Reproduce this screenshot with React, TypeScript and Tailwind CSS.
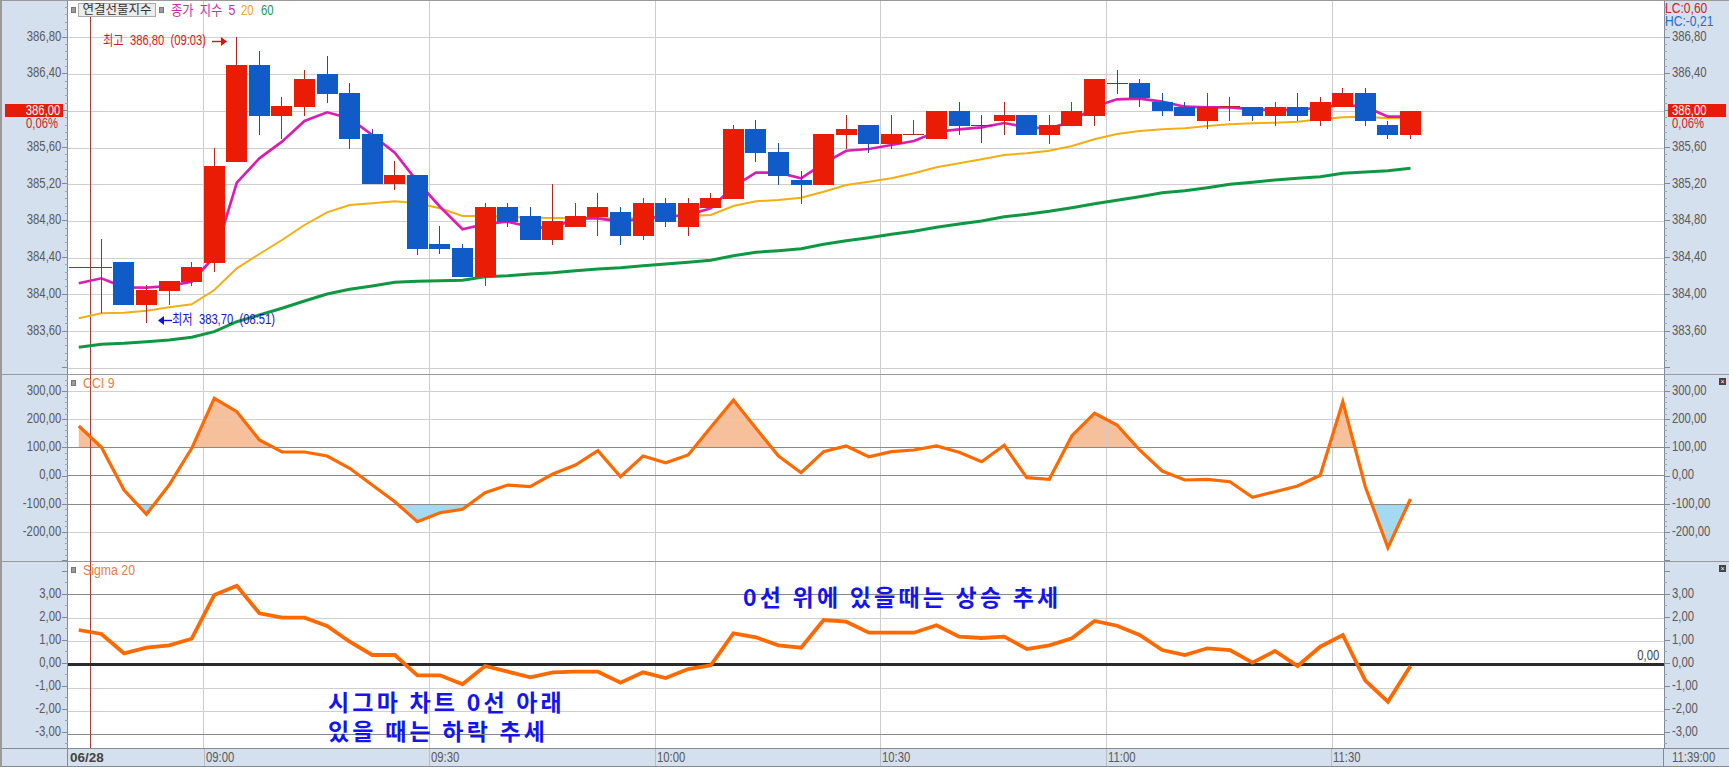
import React from "react";

const X = (i: number) => 101.4 + 22.57 * i;
const xs = (i: number) => i - 1;

type C = [number, number, number, number, "r" | "b"];
const candles: C[] = [
  [802, 802, 717, 940, "r"],
  [787, 914, 787, 914, "b"],
  [870, 914, 855, 968, "r"],
  [843, 872, 843, 915, "r"],
  [802, 845, 787, 858, "r"],
  [498, 788, 443, 815, "r"],
  [195, 485, 112, 485, "r"],
  [195, 347, 152, 405, "b"],
  [318, 347, 290, 417, "r"],
  [237, 320, 210, 347, "r"],
  [223, 281, 168, 308, "b"],
  [280, 416, 250, 446, "b"],
  [402, 553, 388, 553, "b"],
  [525, 553, 483, 570, "r"],
  [525, 746, 525, 765, "b"],
  [733, 746, 678, 761, "b"],
  [745, 830, 732, 830, "b"],
  [622, 830, 608, 858, "r"],
  [622, 665, 608, 680, "b"],
  [648, 719, 622, 719, "b"],
  [664, 719, 552, 735, "r"],
  [648, 680, 608, 680, "r"],
  [622, 650, 580, 708, "r"],
  [636, 707, 622, 735, "b"],
  [609, 707, 595, 720, "r"],
  [609, 665, 595, 680, "b"],
  [609, 680, 595, 708, "r"],
  [595, 623, 580, 623, "r"],
  [387, 596, 376, 596, "r"],
  [387, 458, 360, 485, "b"],
  [456, 527, 430, 555, "b"],
  [540, 554, 513, 612, "b"],
  [402, 554, 402, 554, "r"],
  [387, 404, 345, 446, "r"],
  [375, 432, 375, 458, "b"],
  [402, 432, 345, 446, "r"],
  [403, 403, 360, 403, "r"],
  [333, 416, 333, 416, "r"],
  [333, 377, 307, 405, "b"],
  [377, 377, 345, 430, "b"],
  [345, 362, 307, 405, "r"],
  [345, 404, 345, 404, "b"],
  [375, 404, 345, 432, "r"],
  [333, 377, 307, 377, "r"],
  [237, 347, 237, 377, "r"],
  [250, 250, 210, 283, "b"],
  [250, 293, 237, 320, "b"],
  [306, 334, 280, 348, "b"],
  [320, 347, 306, 347, "b"],
  [320, 362, 280, 388, "r"],
  [320, 320, 292, 362, "r"],
  [320, 347, 320, 362, "b"],
  [320, 347, 306, 377, "r"],
  [320, 347, 280, 362, "b"],
  [306, 362, 292, 377, "r"],
  [280, 320, 265, 320, "r"],
  [280, 362, 265, 377, "b"],
  [376, 404, 362, 417, "b"],
  [334, 404, 334, 417, "r"],
];

const ma5 = [850, 835, 862, 863, 858, 845, 770, 548, 475, 425, 363, 337, 355, 405, 458, 545, 620, 688, 672, 665, 680, 685, 655, 655, 665, 655, 650, 645, 625, 560, 518, 518, 535, 490, 452, 447, 435, 423, 395, 388, 382, 369, 382, 385, 365, 320, 298, 296, 305, 320, 322, 322, 328, 330, 330, 322, 315, 320, 350, 350];
const ma20 = [955, 940, 938, 932, 922, 913, 870, 805, 762, 720, 675, 637, 615, 610, 604, 610, 625, 648, 648, 650, 653, 654, 655, 655, 655, 655, 650, 648, 645, 618, 604, 600, 593, 575, 555, 545, 535, 520, 502, 490, 478, 465, 460, 452, 438, 418, 402, 393, 388, 385, 378, 373, 370, 368, 365, 358, 352, 350, 355, 355];
const ma60 = [1042, 1033, 1030, 1025, 1020, 1012, 995, 965, 945, 925, 903, 882, 868, 858, 847, 844, 842, 841, 830, 827, 822, 818, 812, 807, 803, 797, 792, 787, 781, 767, 757, 752, 746, 733, 722, 713, 703, 694, 682, 672, 663, 650, 643, 634, 623, 611, 601, 590, 578, 572, 563, 553, 547, 540, 535, 530, 520, 516, 512, 505];
const cci = [168, 232, 360, 433, 345, 235, 85, 125, 210, 246, 246, 258, 295, 345, 395, 455, 428, 418, 368, 345, 350, 312, 285, 242, 320, 258, 278, 255, 172, 90, 175, 258, 308, 245, 228, 260, 245, 240, 228, 247, 275, 226, 323, 328, 197, 130, 165, 240, 303, 330, 328, 335, 382, 365, 348, 316, 95, 350, 533, 387];
const sigma = [780, 792, 850, 833, 826, 806, 675, 647, 730, 743, 743, 768, 815, 855, 855, 916, 916, 943, 888, 905, 922, 907, 905, 905, 938, 907, 924, 897, 886, 790, 802, 826, 833, 750, 755, 788, 788, 788, 766, 800, 804, 800, 837, 826, 805, 753, 767, 795, 840, 855, 835, 840, 878, 843, 888, 830, 795, 932, 995, 888];

const pts1 = (a: number[]) => a.map((v, k) => `${X(xs(k)).toFixed(1)},${(v / 3).toFixed(1)}`).join(" ");
const pts2 = (a: number[]) => a.map((v, k) => `${X(xs(k)).toFixed(1)},${(370 + v / 3).toFixed(1)}`).join(" ");

const vgrid = [203.5, 429.5, 655.5, 880.5, 1106.5, 1332];
const priceY = [37.5, 74.5, 111.5, 148.5, 184.5, 221.5, 258.5, 294.5, 331.5, 368.5];
const cciY: [number, boolean][] = [[391.5, false], [419.5, false], [447.5, true], [475.5, true], [504.5, true], [532.5, false]];
const sigY: [number, boolean][] = [[594.5, true], [618.5, false], [641.5, false], [688.5, false], [711.5, false], [734.5, true]];

const priceLabels = ["386,80", "386,40", "386,00", "385,60", "385,20", "384,80", "384,40", "384,00", "383,60"];
const cciLabels = ["300,00", "200,00", "100,00", "0,00", "-100,00", "-200,00"];
const sigLabels = ["3,00", "2,00", "1,00", "0,00", "-1,00", "-2,00", "-3,00"];

function Grid({ y1, y2, lines }: { y1: number; y2: number; lines: [number, boolean][] }) {
  return (
    <g shapeRendering="crispEdges">
      {vgrid.map((x) => (
        <line key={x} x1={x} x2={x} y1={y1} y2={y2} stroke="#cccccc" strokeWidth={1} />
      ))}
      {lines.map(([y, dark]) => (
        <line key={y} x1={68} x2={1664} y1={y} y2={y} stroke={dark ? "#8a8a8a" : "#cfcfcf"} strokeWidth={1} />
      ))}
      <line x1={68} x2={1664} y1={y1 + 0.5} y2={y1 + 0.5} stroke="#999999" strokeWidth={1} />
    </g>
  );
}

function Crosshair({ y1, y2 }: { y1: number; y2: number }) {
  return <line x1={90.5} x2={90.5} y1={y1} y2={y2} stroke="#ad3a3a" strokeWidth={1} shapeRendering="crispEdges" />;
}

function PriceChart() {
  return (
    <svg className="block w-[1596px] h-[374px]" viewBox="68 0 1596 374">
      <Grid y1={0} y2={374} lines={priceY.map((y) => [y, false] as [number, boolean])} />
      <Crosshair y1={17} y2={374} />
      <polyline points={pts1(ma60)} fill="none" stroke="#0f9744" strokeWidth={3} />
      <polyline points={pts1(ma20)} fill="none" stroke="#f2ae12" strokeWidth={2} />
      <polyline points={pts1(ma5)} fill="none" stroke="#d91fb2" strokeWidth={2.7} />
      <g shapeRendering="crispEdges">
        {candles.map(([t, b, wt, wb, c], i) => {
          const cx = X(i);
          const wick = c === "r" ? "#b3281c" : "#1650ab";
          const fill = c === "r" ? "#ea1c06" : "#115bc8";
          const doji = t === b;
          return (
            <g key={i}>
              <line x1={cx} x2={cx} y1={wt / 3} y2={wb / 3} stroke={wick} strokeWidth={1} />
              {doji ? (
                <line x1={cx - 10.5} x2={cx + 10.5} y1={t / 3} y2={t / 3} stroke={wick} strokeWidth={1} />
              ) : (
                <rect x={cx - 10.5} width={21} y={t / 3} height={(b - t) / 3} fill={fill} />
              )}
            </g>
          );
        })}
        <line x1={69} x2={112} y1={267.5} y2={267.5} stroke="#b3281c" strokeWidth={1} />
      </g>
      <path d="M212 41.5H222" stroke="#e01010" strokeWidth={1.4} />
      <path d="M221 37L227 41.5L221 46Z" fill="#e01010" />
      <path d="M162 320.5H172" stroke="#1010e0" strokeWidth={1.4} />
      <path d="M164 316L158 320.5L164 325Z" fill="#1010e0" />
    </svg>
  );
}

function CciChart() {
  const line = pts2(cci);
  const firstX = X(-1).toFixed(1);
  const lastX = X(58).toFixed(1);
  return (
    <svg className="block w-[1596px] h-[187px]" viewBox="68 374 1596 187">
      <defs>
        <clipPath id="above"><rect x={68} y={374} width={1596} height={73.5} /></clipPath>
        <clipPath id="below"><rect x={68} y={504.5} width={1596} height={56.5} /></clipPath>
      </defs>
      <polygon points={`${line} ${lastX},447.5 ${firstX},447.5`} fill="#f7c09c" clipPath="url(#above)" />
      <polygon points={`${line} ${lastX},504.5 ${firstX},504.5`} fill="#a3d9f1" clipPath="url(#below)" />
      <Grid y1={374} y2={561} lines={cciY} />
      <Crosshair y1={374} y2={561} />
      <polyline points={line} fill="none" stroke="#ff6a00" strokeWidth={3.2} strokeLinejoin="miter" />
    </svg>
  );
}

function SigmaChart() {
  return (
    <svg className="block w-[1596px] h-[187px]" viewBox="68 561 1596 187">
      <Grid y1={561} y2={748} lines={sigY} />
      <Crosshair y1={561} y2={748} />
      <line x1={68} x2={1664} y1={664.5} y2={664.5} stroke="#2b2b2b" strokeWidth={2.8} />
      <polyline points={pts2(sigma)} fill="none" stroke="#ff6a00" strokeWidth={3.8} />
    </svg>
  );
}

function Ticks({ h, first, step, sub, side }: { h: number; first: number; step: number; sub: number; side: "l" | "r" }) {
  const major: number[] = [];
  const minor: number[] = [];
  const s = step / sub;
  for (let y = first % s; y < h; y += s) {
    const k = (y - first) / step;
    if (Math.abs(k - Math.round(k)) < 0.01) major.push(y);
    else minor.push(y);
  }
  const w = side === "l" ? 68 : 65;
  return (
    <svg className="absolute inset-0 w-full h-full pointer-events-none" viewBox={`0 0 ${w} ${h}`} preserveAspectRatio="none" shapeRendering="crispEdges">
      <line x1={side === "l" ? 67.5 : 0.5} x2={side === "l" ? 67.5 : 0.5} y1={0} y2={h} stroke="#7f8b99" />
      {major.map((y) => (
        <line key={y} x1={side === "l" ? 62 : 0} x2={side === "l" ? 68 : 6} y1={Math.floor(y) + 0.5} y2={Math.floor(y) + 0.5} stroke="#7f8b99" />
      ))}
      {minor.map((y) => (
        <line key={y} x1={side === "l" ? 65 : 0} x2={side === "l" ? 68 : 3} y1={Math.floor(y) + 0.5} y2={Math.floor(y) + 0.5} stroke="#9aa5b2" />
      ))}
      <line x1={0} x2={w} y1={0.5} y2={0.5} stroke="#999999" />
    </svg>
  );
}

const axisFont = "font-['Liberation_Sans',sans-serif] text-[14.5px] leading-none text-[#5a5a5a]";
const krFont = "font-['Liberation_Sans','Noto_Sans_CJK_KR',sans-serif]";

function NL({ children }: { children: React.ReactNode }) {
  return <span className="inline-block whitespace-nowrap origin-left scale-x-[0.78]">{children}</span>;
}
function NR({ children }: { children: React.ReactNode }) {
  return <span className="inline-block whitespace-nowrap origin-right scale-x-[0.78]">{children}</span>;
}

function Axis({ labels, pt, step, side, h, first, sub, children }: { labels: string[]; pt: string; step: string; side: "l" | "r"; h: number; first: number; sub: number; children?: React.ReactNode }) {
  return (
    <div className={`relative shrink-0 bg-[#d5e0ee] ${side === "l" ? "w-[68px]" : "w-[65px]"}`}>
      <Ticks h={h} first={first} step={Number(step)} sub={sub} side={side} />
      <div className={`relative flex flex-col ${pt} ${axisFont}`}>
        {labels.map((t) => (
          <div
            key={t}
            className={`flex items-center ${side === "l" ? "justify-end pr-[7px]" : "justify-start pl-[8px]"}`}
            style={{ height: `${step}px` }}
          >
            {side === "l" ? <NR>{t}</NR> : <NL>{t}</NL>}
          </div>
        ))}
      </div>
      {children}
    </div>
  );
}

function PriceTag({ right }: { right?: boolean }) {
  return (
    <div className={`absolute top-[104px] flex flex-col ${right ? "left-[4px] w-[58px] items-start" : "left-[5px] w-[58px] items-end"}`}>
      <div className={`w-full h-[13px] bg-[#e81c06] flex items-center font-['Liberation_Sans',sans-serif] text-[14.5px] leading-none text-white ${right ? "pl-[4px]" : "justify-end pr-[3px]"}`}>
        {right ? <NL>386,00</NL> : <NR>386,00</NR>}
      </div>
      <div className={`font-['Liberation_Sans',sans-serif] text-[14.5px] leading-none text-[#d4202a] h-[12px] flex items-center ${right ? "pl-[4px]" : "pr-[5px]"}`}>
        {right ? <NL>0,06%</NL> : <NR>0,06%</NR>}
      </div>
    </div>
  );
}

function GraySquare() {
  return <span className="block w-[5px] h-[6px] bg-[#9c9c9c] border border-[#777] shrink-0" />;
}

function CloseBox() {
  return (
    <span className="absolute right-[3px] top-[4px] flex items-center justify-center w-[7px] h-[7px] bg-[#444] text-white text-[7px] leading-none font-['Liberation_Sans',sans-serif]">×</span>
  );
}

export default function App() {
  return (
    <div className="relative w-[1729px] h-[767px] overflow-hidden bg-white flex flex-col">
      <div className="absolute left-0 top-0 bottom-0 w-[2px] bg-[#9a9a9a] z-10" />
      <div className="flex h-[374px] shrink-0">
        <Axis labels={priceLabels} pt="pt-[17.6px]" step="36.75" side="l" h={374} first={37} sub={5}>
          <PriceTag />
        </Axis>
        <div className="relative flex-1">
          <PriceChart />
          <div className={`absolute left-[3px] top-[3px] flex items-center text-[13px] leading-none ${krFont}`}>
            <GraySquare />
            <span className="ml-[2px] h-[14px] w-[78px] flex items-center justify-center bg-[#ececec] border border-[#aaa] text-[#333] text-[12.5px]">연결선물지수</span>
            <span className="ml-[3px]"><GraySquare /></span>
            <span className="ml-[7px] w-[61px] text-[#c430a6] text-[14px]"><span className="inline-block whitespace-nowrap origin-left scale-x-[0.88] [word-spacing:3px]">종가 지수 5</span></span>
            <span className="ml-[9px] w-[13px] text-[#e5a91a] text-[14.5px]"><NL>20</NL></span>
            <span className="ml-[7px] w-[13px] text-[#1a9548] text-[14.5px]"><NL>60</NL></span>
          </div>
          <span className={`absolute left-[35px] top-[33px] text-[14px] leading-none text-[#d0181e] ${krFont}`}>
            <span className="inline-block whitespace-nowrap origin-left scale-x-[0.8] [word-spacing:4px]">최고 386,80 (09:03)</span>
          </span>
          <span className={`absolute left-[104px] top-[312px] text-[14px] leading-none text-[#1414c8] ${krFont}`}>
            <span className="inline-block whitespace-nowrap origin-left scale-x-[0.8] [word-spacing:4px]">최저 383,70 (08:51)</span>
          </span>
        </div>
        <Axis labels={priceLabels} pt="pt-[17.6px]" step="36.75" side="r" h={374} first={37} sub={5}>
          <PriceTag right />
          <div className="absolute left-[1px] top-[1px] flex flex-col font-['Liberation_Sans',sans-serif] text-[15.5px] leading-[13px]">
            <span className="text-[#d0202a]"><NL>LC:0,60</NL></span>
            <span className="text-[#2a6cc0]"><NL>HC:-0,21</NL></span>
          </div>
        </Axis>
      </div>

      <div className="flex h-[187px] shrink-0">
        <Axis labels={cciLabels} pt="pt-[2px]" step="28.2" side="l" h={187} first={17.5} sub={5} />
        <div className="relative flex-1">
          <CciChart />
          <div className={`absolute left-[3px] top-[2px] flex items-center gap-[6.5px] text-[14px] leading-none text-[#e2814a] ${krFont}`}>
            <GraySquare />
            <span className="inline-block whitespace-nowrap origin-left scale-x-[0.88]">CCI 9</span>
          </div>
        </div>
        <Axis labels={cciLabels} pt="pt-[2px]" step="28.2" side="r" h={187} first={17.5} sub={5}>
          <CloseBox />
        </Axis>
      </div>

      <div className="flex h-[187px] shrink-0">
        <Axis labels={sigLabels} pt="pt-[20.8px]" step="23" side="l" h={187} first={33} sub={2} />
        <div className="relative flex-1">
          <SigmaChart />
          <div className={`absolute left-[3px] top-[2px] flex items-center gap-[6.5px] text-[14px] leading-none text-[#e2814a] ${krFont}`}>
            <GraySquare />
            <span className="inline-block whitespace-nowrap origin-left scale-x-[0.88]">Sigma 20</span>
          </div>
          <span className={`absolute right-[5px] top-[87px] ${axisFont} text-[#444]`}><NR>0,00</NR></span>
          <div className="absolute left-[260px] top-[126px] font-['Noto_Sans_CJK_KR',sans-serif] font-bold text-[23px] leading-[29px] tracking-[3.2px] text-[#1414f0] whitespace-pre">
            {"시그마 차트 0선 아래\n있을 때는 하락 추세"}
          </div>
          <div className="absolute left-[675px] top-[21px] font-['Noto_Sans_CJK_KR',sans-serif] font-bold text-[23px] leading-[29px] tracking-[3.2px] text-[#1414f0] whitespace-pre">
            0선 위에 있을때는 상승 추세
          </div>
        </div>
        <Axis labels={sigLabels} pt="pt-[20.8px]" step="23" side="r" h={187} first={33} sub={2}>
          <CloseBox />
        </Axis>
      </div>

      <div className={`relative flex h-[19px] shrink-0 bg-[#d5e0ee] border-t border-[#8a8a8a] border-b ${axisFont}`}>
        <div className="w-[68px] shrink-0 border-r border-[#7f8b99]" />
        <div className="w-[135.5px] shrink-0 flex items-center pl-[2px]">
          <span className="font-bold text-[13.5px] text-[#444]">06/28</span>
        </div>
        {["09:00", "09:30", "10:00", "10:30", "11:00"].map((t) => (
          <div key={t} className="w-[225.6px] shrink-0 flex items-center pl-[1px] border-l border-[#b8bec6]"><NL>{t}</NL></div>
        ))}
        <div className="w-[332px] shrink-0 flex items-center pl-[1px] border-l border-[#b8bec6]"><NL>11:30</NL></div>
        <div className="flex-1 flex items-center pl-[8px] border-l border-[#7f8b99]"><NL>11:39:00</NL></div>
      </div>
    </div>
  );
}
